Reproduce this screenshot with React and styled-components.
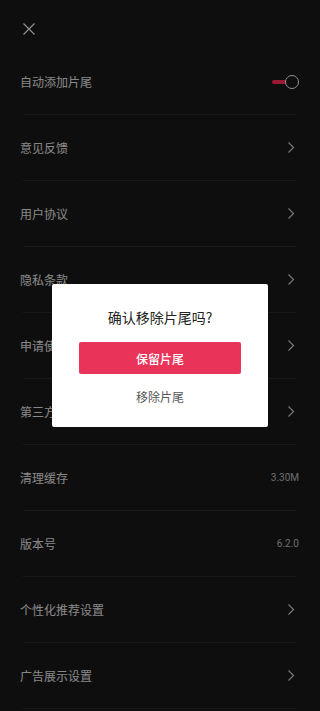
import React, { useState } from "react";
import styled, { createGlobalStyle } from "styled-components";

const GlobalStyle = createGlobalStyle`
  html, body {
    margin: 0;
    padding: 0;
    background: #181818;
  }
  body {
    font-family: "Noto Sans CJK SC", "Noto Sans", sans-serif;
  }
  * { box-sizing: border-box; }
`;

const Page = styled.div`
  width: 320px;
  height: 711px;
  overflow: hidden;
  background: #181818;
  color: #e8e8e8;
`;

const Header = styled.div`
  height: 49px;
  display: flex;
  align-items: flex-start;
  padding: 23px 0 0 23px;
`;

const CloseBtn = styled.button`
  width: 12px;
  height: 12px;
  padding: 0;
  border: none;
  background: transparent;
  display: flex;
  align-items: center;
  justify-content: center;
`;

const List = styled.div`
  display: flex;
  flex-direction: column;
`;

const Row = styled.div`
  height: 65px;
  display: flex;
  align-items: center;
  justify-content: space-between;
  padding: 0 21px 0 20px;
`;

const Label = styled.span`
  font-size: 12px;
  line-height: 16px;
  color: #e2e2e2;
`;

const Value = styled.span`
  font-size: 10px;
  line-height: 14px;
  color: #b8b8b8;
  font-family: "Roboto", "Noto Sans", sans-serif;
`;

const Divider = styled.div`
  height: 1px;
  margin: 0 24px 0 23px;
  background: #2b2b2b;
`;

const Chevron = styled.svg`
  width: 8px;
  height: 13px;
  margin-right: 4px;
`;

const Switch = styled.button`
  position: relative;
  width: 27px;
  height: 14px;
  padding: 0;
  border: none;
  background: transparent;
`;

const Track = styled.span`
  position: absolute;
  left: 0;
  top: 5px;
  width: 18px;
  height: 4px;
  border-radius: 2px;
  background: ${(p) => (p.on ? "#fe2c55" : "#555")};
`;

const Thumb = styled.span`
  position: absolute;
  right: 0;
  top: 0;
  width: 14px;
  height: 14px;
  border-radius: 50%;
  border: 1.5px solid #f2f2f2;
  background: #181818;
`;

const Overlay = styled.div`
  position: fixed;
  inset: 0;
  background: rgba(0, 0, 0, 0.4);
  display: flex;
  align-items: center;
  justify-content: center;
`;

const Dialog = styled.div`
  width: 216px;
  height: 143px;
  background: #ffffff;
  border-radius: 2px;
  display: flex;
  flex-direction: column;
  align-items: center;
  padding: 23px 27px 0;
`;

const DialogTitle = styled.div`
  font-size: 14px;
  line-height: 20px;
  color: #222222;
`;

const PrimaryButton = styled.button`
  width: 100%;
  height: 32px;
  margin-top: 15px;
  border: none;
  border-radius: 2px;
  background: #ea3358;
  color: #ffffff;
  font-family: inherit;
  font-size: 12px;
  font-weight: 500;
`;

const TextButton = styled.button`
  margin-top: 14px;
  border: none;
  background: transparent;
  padding: 0;
  font-family: inherit;
  font-size: 12px;
  line-height: 18px;
  color: #555555;
`;

const ChevronIcon = () => (
  <Chevron viewBox="0 0 8 13">
    <path d="M1.5 1.5 L6.5 6.5 L1.5 11.5" fill="none" stroke="#c4c4c4" strokeWidth="1.2" />
  </Chevron>
);

const rows = [
  { label: "自动添加片尾", type: "switch" },
  { label: "意见反馈", type: "link" },
  { label: "用户协议", type: "link" },
  { label: "隐私条款", type: "link" },
  { label: "申请使用权限", type: "link" },
  { label: "第三方SDK列表", type: "link" },
  { label: "清理缓存", type: "value", value: "3.30M" },
  { label: "版本号", type: "value", value: "6.2.0" },
  { label: "个性化推荐设置", type: "link" },
  { label: "广告展示设置", type: "link" },
];

const App = () => {
  const [ending, setEnding] = useState(true);
  const [open, setOpen] = useState(true);

  return (
    <>
      <GlobalStyle />
      <Page>
        <Header>
          <CloseBtn aria-label="close">
            <svg width="12" height="12" viewBox="0 0 12 12">
              <path d="M0.5 0.5 L11.5 11.5 M11.5 0.5 L0.5 11.5" stroke="#eeeeee" strokeWidth="1.2" fill="none" />
            </svg>
          </CloseBtn>
        </Header>
        <List>
          {rows.map((r) => (
            <React.Fragment key={r.label}>
              <Row>
                <Label>{r.label}</Label>
                {r.type === "switch" && (
                  <Switch onClick={() => setEnding(!ending)}>
                    <Track on={ending ? 1 : 0} />
                    <Thumb />
                  </Switch>
                )}
                {r.type === "link" && <ChevronIcon />}
                {r.type === "value" && <Value>{r.value}</Value>}
              </Row>
              <Divider />
            </React.Fragment>
          ))}
        </List>
      </Page>
      {open && (
        <Overlay>
          <Dialog>
            <DialogTitle>确认移除片尾吗?</DialogTitle>
            <PrimaryButton onClick={() => setOpen(false)}>保留片尾</PrimaryButton>
            <TextButton onClick={() => setOpen(false)}>移除片尾</TextButton>
          </Dialog>
        </Overlay>
      )}
    </>
  );
};

export default App;
